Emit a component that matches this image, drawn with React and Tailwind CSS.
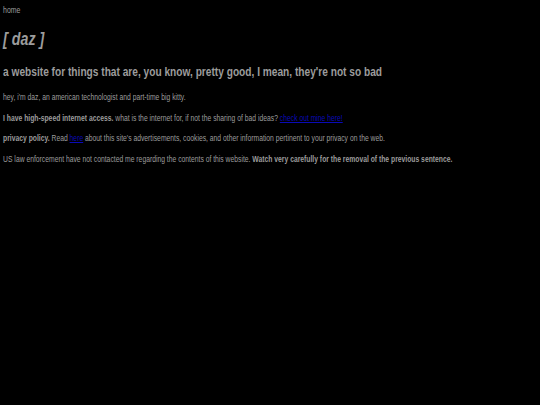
export default function App() {
  return (
    <div className="min-h-[405px] bg-black overflow-hidden">
      {/* the page reads as a condensed face; squeeze normal-width text horizontally */}
      <div
        className="w-[701px] origin-top-left scale-x-[0.77] text-[#9c9c9c] px-[4px] pt-[4px]"
        style={{ fontFamily: '"Liberation Sans", Arial, sans-serif' }}
      >
        <div className="text-[9px] leading-[12px]">home</div>
        <h1 className="mt-[11px] text-[18.5px] leading-[24px] font-bold italic">[ daz ]</h1>
        <h2 className="mt-[12px] text-[13.2px] leading-[18px] font-bold">
          a website for things that are, you know, pretty good, I mean, they're not so bad
        </h2>
        <div className="mt-[10px] text-[8.8px] leading-[12px] flex flex-col gap-[8.5px]">
          <p>hey, i'm daz, an american technologist and part-time big kitty.</p>
          <p>
            <b>I have high-speed internet access.</b> what is the internet for, if not the sharing of bad ideas?{' '}
            <a href="#" className="text-[#0a0ab8] underline">check out mine here!</a>
          </p>
          <p>
            <b>privacy policy.</b> Read <a href="#" className="text-[#0a0ab8] underline">here</a> about this site's advertisements, cookies, and other information pertinent to your privacy on the web.
          </p>
          <p>
            US law enforcement have not contacted me regarding the contents of this website.{' '}
            <b>Watch very carefully for the removal of the previous sentence.</b>
          </p>
        </div>
      </div>
    </div>
  )
}
